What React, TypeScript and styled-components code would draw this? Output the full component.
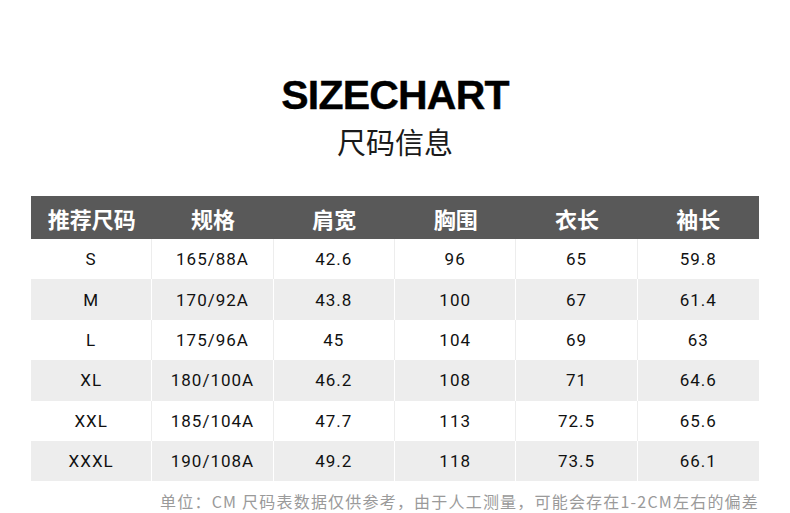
import React from 'react';
import styled, { createGlobalStyle } from 'styled-components';

const GlobalStyle = createGlobalStyle`
    html, body {
        margin: 0;
        padding: 0;
        background: #ffffff;
    }
    body {
        font-family: 'Liberation Sans', 'Noto Sans CJK SC', sans-serif;
    }
`;

const headers = ['推荐尺码', '规格', '肩宽', '胸围', '衣长', '袖长'];

const rows = [
    ['S', '165/88A', '42.6', '96', '65', '59.8'],
    ['M', '170/92A', '43.8', '100', '67', '61.4'],
    ['L', '175/96A', '45', '104', '69', '63'],
    ['XL', '180/100A', '46.2', '108', '71', '64.6'],
    ['XXL', '185/104A', '47.7', '113', '72.5', '65.6'],
    ['XXXL', '190/108A', '49.2', '118', '73.5', '66.1'],
];

const App: React.FC = () => {
    return (
        <>
            <GlobalStyle />
            <Page>
                <TitleBlock>
                    <Title>SIZECHART</Title>
                    <Subtitle>尺码信息</Subtitle>
                </TitleBlock>
                <Table>
                    <HeaderRow>
                        {headers.map((h) => (
                            <HeaderCell key={h}>{h}</HeaderCell>
                        ))}
                    </HeaderRow>
                    {rows.map((row, i) => (
                        <Row key={row[0]} $shaded={i % 2 === 1}>
                            {row.map((v, j) => (
                                <Cell key={j} $shaded={i % 2 === 1}>
                                    {v}
                                </Cell>
                            ))}
                        </Row>
                    ))}
                </Table>
                <Note>
                    单位：CM 尺码表数据仅供参考，由于人工测量，可能会存在1-2CM左右的偏差
                </Note>
            </Page>
        </>
    );
};

export default App;

const Page = styled.div`
    width: 790px;
    height: 513px;
    box-sizing: border-box;
    padding: 71px 31px 0 31px;
    display: flex;
    flex-direction: column;
    overflow: hidden;
`;

const TitleBlock = styled.div`
    display: flex;
    flex-direction: column;
    align-items: center;
`;

const Title = styled.h1`
    margin: 0;
    font-family: 'Liberation Sans', Arial, sans-serif;
    font-weight: 700;
    font-size: 41px;
    line-height: 48px;
    letter-spacing: -0.8px;
    color: #000000;
    -webkit-text-stroke: 0.4px #000000;
`;

const Subtitle = styled.h2`
    margin: 3px 0 0 0;
    font-family: 'Noto Sans CJK SC', sans-serif;
    font-weight: 400;
    font-size: 29px;
    line-height: 38px;
    color: #1a1a1a;
`;

const Table = styled.div`
    margin-top: 36px;
    width: 728px;
    display: flex;
    flex-direction: column;
`;

const HeaderRow = styled.div`
    display: grid;
    grid-template-columns: repeat(6, 1fr);
    height: 43px;
    background: #595959;
`;

const HeaderCell = styled.div`
    display: flex;
    align-items: center;
    justify-content: center;
    font-family: 'Noto Sans CJK SC', sans-serif;
    font-weight: 700;
    font-size: 22px;
    color: #ffffff;
`;

const Row = styled.div<{ $shaded: boolean }>`
    display: grid;
    grid-template-columns: repeat(6, 1fr);
    height: 40.4px;
    background: ${({ $shaded }) => ($shaded ? '#ededed' : '#ffffff')};
`;

const Cell = styled.div<{ $shaded: boolean }>`
    display: flex;
    align-items: center;
    justify-content: center;
    font-family: Roboto, 'Liberation Sans', sans-serif;
    font-size: 17px;
    letter-spacing: 1px;
    color: #111111;
    border-right: 1px solid ${({ $shaded }) => ($shaded ? '#ffffff' : '#ededed')};
    &:last-child {
        border-right: none;
    }
`;

const Note = styled.p`
    margin: 9px 0 0 0;
    text-align: right;
    font-family: 'Noto Sans CJK SC', sans-serif;
    font-size: 16px;
    line-height: 22px;
    color: #9a9a9a;
    letter-spacing: 1.2px;
    white-space: nowrap;
`;
